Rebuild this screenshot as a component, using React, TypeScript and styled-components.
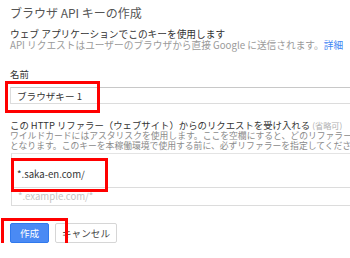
import React from 'react';
import styled, { createGlobalStyle } from 'styled-components';

const GlobalStyle = createGlobalStyle`
  html, body {
    margin: 0;
    padding: 0;
    background: #fff;
    overflow: hidden;
  }
  body {
    font-family: "Noto Sans CJK JP", "Noto Sans", sans-serif;
  }
`;

const App = () => (
  <>
    <GlobalStyle />
    <StPage>
      <StTitle>ブラウザ API キーの作成</StTitle>
      <StIntro>
        <p>ウェブ アプリケーションでこのキーを使用します</p>
        <StMuted>
          API リクエストはユーザーのブラウザから直接 Google に送信されます。<a href="#">詳細</a>
        </StMuted>
      </StIntro>

      <StLabel>名前</StLabel>
      <StField>
        <StInput defaultValue="ブラウザキー 1" />
        <StMark $left={-5} $top={-6} $width={95} $height={32} />
      </StField>

      <StLabel $gap={15.5}>
        この HTTP リファラー（ウェブサイト）からのリクエストを受け入れる <StOptional>(省略可)</StOptional>
      </StLabel>
      <StHelp>
        ワイルドカードにはアスタリスクを使用します。ここを空欄にすると、どのリファラーからのリクエストも受け入れるこ
        <br />
        となります。このキーを本稼働環境で使用する前に、必ずリファラーを指定してください。
      </StHelp>

      <StReferrerList>
        <StReferrerRow $first>*.saka-en.com/</StReferrerRow>
        <StReferrerRow $placeholder>*.example.com/*</StReferrerRow>
        <StMark $left={0} $top={5} $width={97} $height={34} />
      </StReferrerList>

      <StButtonRow>
        <StButton type="button" $primary>
          作成
        </StButton>
        <StButton type="button">キャンセル</StButton>
        <StMark $left={-9} $top={-5} $width={67} $height={34} />
      </StButtonRow>
    </StPage>
  </>
);

export default App;

const StPage = styled.div`
  width: 460px;
  padding: 4px 0 0 10px;
  color: #333;
`;

const StTitle = styled.h1`
  margin: 0;
  font-size: 12px;
  line-height: 17px;
  font-weight: 400;
  color: #555;
`;

const StIntro = styled.div`
  margin-top: 7.5px;
  font-size: 9.7px;
  line-height: 11px;

  & > p {
    margin: 0;
    white-space: nowrap;
  }
`;

const StMuted = styled.p`
  color: #9a9a9a;

  & > a {
    color: #4285f4;
    text-decoration: none;
  }
`;

const StLabel = styled.div<{ $gap?: number }>`
  margin-top: ${({ $gap }) => $gap ?? 18}px;
  font-size: 9.4px;
  line-height: 11px;
  color: #333;
  white-space: nowrap;
`;

const StOptional = styled.span`
  font-size: 8.2px;
  color: #b0b0b0;
`;

const StField = styled.div`
  position: relative;
  margin-top: 7.5px;
`;

const StInput = styled.input`
  display: block;
  box-sizing: border-box;
  width: 440px;
  height: 17px;
  margin: 0;
  padding: 0 0 0 6px;
  border: 1px solid #dcdcdc;
  border-top-color: #c8c8c8;
  border-radius: 0;
  outline: none;
  font-family: "Noto Sans CJK JP", "Noto Sans", sans-serif;
  font-size: 9.6px;
  color: #333;
  background: #fff;
`;

const StMark = styled.div<{ $left: number; $top: number; $width: number; $height: number }>`
  position: absolute;
  left: ${({ $left }) => $left}px;
  top: ${({ $top }) => $top}px;
  width: ${({ $width }) => $width}px;
  height: ${({ $height }) => $height}px;
  box-sizing: border-box;
  border: 3px solid #f00;
  pointer-events: none;
`;

const StHelp = styled.p`
  margin: 0;
  font-size: 8.8px;
  line-height: 10.5px;
  color: #8a8a8a;
  white-space: nowrap;
`;

const StReferrerList = styled.div`
  position: relative;
  width: 439px;
  margin: 1.5px 0 0 1px;
`;

const StReferrerRow = styled.div<{ $first?: boolean; $placeholder?: boolean }>`
  box-sizing: border-box;
  height: ${({ $first }) => ($first ? 35 : 18)}px;
  padding: ${({ $first }) => ($first ? '14px 0 0 5px' : '2px 0 0 6px')};
  border: 1px solid #dcdcdc;
  border-top: ${({ $first }) => ($first ? '1px solid #e4e4e4' : 'none')};
  font-size: 9.6px;
  line-height: 12px;
  color: ${({ $placeholder }) => ($placeholder ? '#c4c4c4' : '#333')};
`;

const StButtonRow = styled.div`
  position: relative;
  display: flex;
  gap: 6px;
  margin-top: 17px;
`;

const StButton = styled.button<{ $primary?: boolean }>`
  box-sizing: border-box;
  height: 20px;
  width: ${({ $primary }) => ($primary ? 39 : 62)}px;
  padding: 0;
  border-radius: 2px;
  border: 1px solid ${({ $primary }) => ($primary ? '#3079ed' : '#d6d6d6')};
  background: ${({ $primary }) => ($primary ? '#4a8af4' : '#fff')};
  color: ${({ $primary }) => ($primary ? '#fff' : '#444')};
  font-family: "Noto Sans CJK JP", "Noto Sans", sans-serif;
  font-size: 9.6px;
  line-height: 18px;
`;
